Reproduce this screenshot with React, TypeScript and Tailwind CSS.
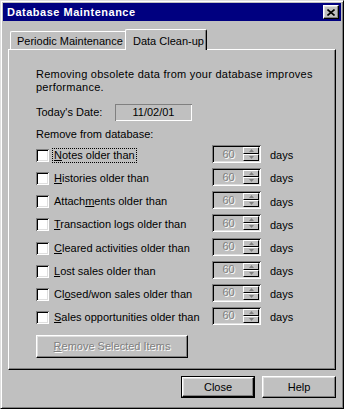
import React from "react";

const font = { fontFamily: '"Liberation Sans", Arial, sans-serif' };

const rows: { pre: string; key: string; post: string; focus?: boolean }[] = [
  { pre: "", key: "N", post: "otes older than", focus: true },
  { pre: "", key: "H", post: "istories older than" },
  { pre: "Attach", key: "m", post: "ents older than" },
  { pre: "", key: "T", post: "ransaction logs older than" },
  { pre: "", key: "C", post: "leared activities older than" },
  { pre: "", key: "L", post: "ost sales older than" },
  { pre: "Cl", key: "o", post: "sed/won sales older than" },
  { pre: "", key: "S", post: "ales opportunities older than" },
];

const raised =
  "border border-t-white border-l-white border-r-black border-b-black shadow-[inset_-1px_-1px_#808080,inset_1px_1px_#dfdfdf] bg-[#c0c0c0]";
const sunken =
  "shadow-[inset_1px_1px_#808080,inset_-1px_-1px_#fff,inset_2px_2px_#000,inset_-2px_-2px_#dfdfdf]";

function Arrow({ up }: { up?: boolean }) {
  return (
    <svg width="5" height="3" viewBox="0 0 5 3" className="block">
      <path d={up ? "M2.5 0 L5 3 L0 3 Z" : "M0 0 L5 0 L2.5 3 Z"} fill="#808080" />
    </svg>
  );
}

function Spinner() {
  return (
    <div className={`w-[49px] h-[18px] flex p-[2px] ${sunken}`}>
      <div className="flex-1 flex items-center justify-center text-[#808080] text-[11px] leading-none [text-shadow:1px_1px_0_#fff]">
        60
      </div>
      <div className="w-[16px] flex flex-col">
        <div className="flex-1 flex items-center justify-center border border-t-white border-l-white border-r-black border-b-black">
          <Arrow up />
        </div>
        <div className="flex-1 flex items-center justify-center border border-t-white border-l-white border-r-black border-b-black">
          <Arrow />
        </div>
      </div>
    </div>
  );
}

export default function App() {
  return (
    <div
      style={font}
      className="w-[344px] h-[409px] bg-[#c0c0c0] border border-t-[#dfdfdf] border-l-[#dfdfdf] border-r-black border-b-black shadow-[inset_1px_1px_#fff,inset_-1px_-1px_#808080] p-[2px] flex flex-col text-[11px] text-black select-none"
    >
      {/* title bar */}
      <div className="h-[18px] bg-[#000080] flex items-center justify-between pl-[4px] pr-[2px] shrink-0">
        <span className="text-white font-bold text-[11px] tracking-[0.5px] leading-none">
          Database Maintenance
        </span>
        <div className={`w-[16px] h-[14px] flex items-center justify-center ${raised}`}>
          <svg width="8" height="7" viewBox="0 0 8 7">
            <path d="M0.5 0.5 L7.5 6.5 M7.5 0.5 L0.5 6.5" stroke="#000" strokeWidth="1.6" />
          </svg>
        </div>
      </div>

      {/* tabs */}
      <div className="mt-[8px] h-[20px] flex items-end pl-[7px] shrink-0">
        <div className="h-[18px] w-[115px] border-t border-l border-white rounded-tl-[2px] flex items-center pl-[6px] pt-[1px]">
          Periodic Maintenance
        </div>
        <div className="relative z-10 h-[21px] w-[82px] -mb-[1px] bg-[#c0c0c0] border-t border-l border-white border-r border-r-black rounded-tl-[2px] rounded-tr-[2px] shadow-[inset_-1px_0_#808080] flex items-start pl-[7px] pt-[3px]">
          Data Clean-up
        </div>
      </div>

      {/* panel */}
      <div className="mx-[5px] h-[321px] border border-t-white border-l-white border-r-black border-b-black shadow-[inset_-1px_-1px_#808080] pl-[27px] pt-[18px] flex flex-col">
        <div className="leading-[13px] tracking-[0.25px]">
          Removing obsolete data from your database improves
          <br />
          performance.
        </div>

        <div className="mt-[10px] h-[17px] flex items-center">
          <span className="w-[79px]">Today's Date:</span>
          <div className="w-[77px] h-[17px] flex items-center justify-center shadow-[inset_1px_1px_#808080,inset_-1px_-1px_#fff]">
            11/02/01
          </div>
        </div>

        <div className="mt-[7px] leading-[13px]">Remove from database:</div>

        <div className="mt-[3px] flex flex-col">
          {rows.map((r, i) => (
            <div key={i} className="h-[23.14px] flex items-center">
              <div className={`w-[13px] h-[13px] bg-white ${sunken}`} />
              <div className="w-[163px] pl-[3px] flex items-center">
                <span
                  className={`px-[1px] leading-[13px] border border-dotted ${
                    r.focus ? "border-black" : "border-transparent"
                  }`}
                >
                  {r.pre}
                  <span className="underline">{r.key}</span>
                  {r.post}
                </span>
              </div>
              <div className="-mt-[3px]">
                <Spinner />
              </div>
              <span className="ml-[9px]">days</span>
            </div>
          ))}
        </div>

        <div
          className={`mt-[6px] w-[152px] h-[23px] flex items-center justify-center text-[#808080] [text-shadow:1px_1px_0_#fff] ${raised}`}
        >
          <span>
            <span className="underline">R</span>emove Selected Items
          </span>
        </div>
      </div>

      {/* buttons */}
      <div className="mt-[6px] flex justify-end gap-[7px] pr-[5px]">
        <div className="w-[74px] h-[22px] border border-black">
          <div className={`w-full h-full flex items-center justify-center ${raised}`}>Close</div>
        </div>
        <div className={`w-[74px] h-[22px] flex items-center justify-center ${raised}`}>Help</div>
      </div>
    </div>
  );
}
